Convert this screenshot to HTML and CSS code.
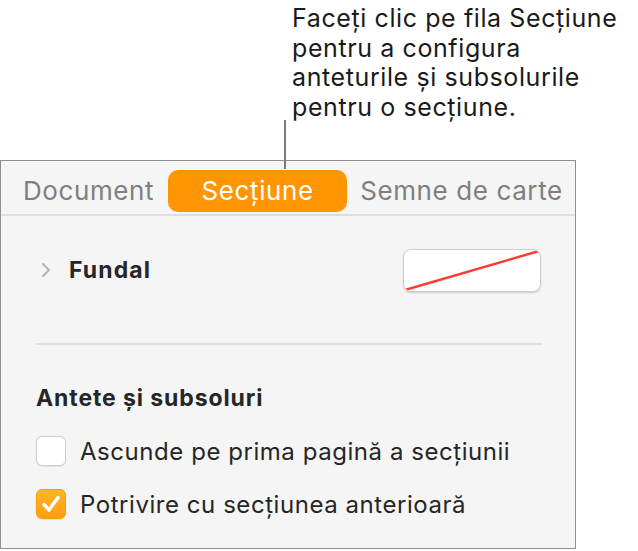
FILE: index.html
```html
<!DOCTYPE html>
<html lang="ro">
<head>
<meta charset="utf-8">
<link rel="stylesheet" href="styles.css">
</head>
<body>
<div class="callout">
  <p class="callout-text">Faceți clic pe fila Secțiune<br>pentru a configura<br>anteturile și subsolurile<br>pentru o secțiune.</p>
  <span class="leader"></span>
</div>
<div class="panel">
  <div class="tabs">
    <span class="tab">Document</span>
    <span class="tab active">Secțiune</span>
    <span class="tab">Semne de carte</span>
  </div>
  <div class="content">
    <div class="fundal-row">
      <svg class="chevron" width="12" height="16" viewBox="0 0 12 16"><path d="M3 2 L9 8 L3 14" fill="none" stroke="#b4b4b4" stroke-width="2" stroke-linecap="round" stroke-linejoin="round"/></svg>
      <span class="fundal-label">Fundal</span>
      <span class="swatch"><svg width="136" height="41" viewBox="0 0 136 41"><line x1="1" y1="40" x2="135" y2="1" stroke="#ff3b30" stroke-width="2.4"/></svg></span>
    </div>
    <div class="divider"></div>
    <h3 class="section-title">Antete și subsoluri</h3>
    <div class="check-row"><span class="box"></span><span class="check-label">Ascunde pe prima pagină a secțiunii</span></div>
    <div class="check-row"><span class="box on"><svg width="24" height="24" viewBox="0 0 24 24"><path d="M5 12.5 L10 18 L19 5.5" fill="none" stroke="#fff" stroke-width="3.4" stroke-linecap="round" stroke-linejoin="round"/></svg></span><span class="check-label">Potrivire cu secțiunea anterioară</span></div>
  </div>
</div>
</body>
</html>
```
FILE: styles.css
```css
html, body {
  margin: 0;
  padding: 0;
  background: #ffffff;
}
body {
  font-family: Inter, "Noto Sans", "Liberation Sans", sans-serif;
  color: #1d1d1f;
  width: 638px;
  height: 551px;
  overflow: hidden;
}
.callout {
  position: relative;
  height: 160px;
}
.callout-text {
  margin: 0;
  padding: 4px 0 0 292px;
  font-size: 25px;
  line-height: 29.7px;
  color: #1a1a1a;
  letter-spacing: 0.6px;
}
.leader {
  position: absolute;
  left: 284px;
  top: 120px;
  width: 2px;
  height: 49px;
  background: #7a7a7a;
  z-index: 2;
}
.panel {
  width: 574px;
  height: 387px;
  border: 1.5px solid #8f8f8f;
  background: #f5f5f5;
  position: relative;
}
.tabs {
  display: flex;
  align-items: center;
  height: 55px;
  border-bottom: 2px solid #dedede;
  padding: 7px 0 0 0;
  box-sizing: border-box;
}
.tab {
  font-size: 26px;
  letter-spacing: 0.6px;
  color: #7f7f7f;
  line-height: 42px;
  height: 42px;
  white-space: nowrap;
}
.tab:first-child {
  margin-left: 22px;
}
.tab.active {
  background: #ff9500;
  color: #ffffff;
  border-radius: 10px;
  width: 179px;
  text-align: center;
  margin-left: 14px;
  margin-right: 13px;
  flex: none;
}
.content {
  padding: 0 34px 0 34px;
}
.fundal-row {
  display: flex;
  align-items: center;
  height: 46px;
  margin-top: 31px;
}
.chevron {
  margin-left: 5px;
  margin-right: 17px;
}
.fundal-label {
  font-size: 23px;
  letter-spacing: 1.1px;
  font-weight: 700;
  color: #262626;
  flex: 1;
}
.swatch {
  width: 136px;
  height: 41px;
  background: #ffffff;
  border: 1px solid #cfcfcf;
  border-radius: 8px;
  box-shadow: 0 1px 2px rgba(0,0,0,0.18);
  display: block;
  overflow: hidden;
}
.swatch svg {
  display: block;
}
.divider {
  height: 2px;
  background: #e0e0e0;
  margin: 50px 0 0 1px;
  width: 506px;
}
.section-title {
  margin: 38px 0 0 1px;
  font-size: 23px;
  letter-spacing: 0.9px;
  font-weight: 700;
  color: #262626;
  line-height: 30px;
}
.check-row {
  display: flex;
  align-items: center;
  height: 30px;
  margin-top: 23px;
}
.check-row + .check-row {
  margin-top: 23px;
}
.box {
  width: 28px;
  height: 28px;
  border: 1px solid #cdcdcd;
  border-radius: 6px;
  background: #ffffff;
  box-shadow: 0 0.5px 1px rgba(0,0,0,0.08);
  margin-left: 1px;
  margin-right: 14px;
  display: flex;
  align-items: center;
  justify-content: center;
  flex: none;
}
.box.on {
  border-color: #f5a00a;
  background: linear-gradient(#ffb52e, #ff9f0a);
}
.check-label {
  font-size: 24px;
  letter-spacing: 0.55px;
  color: #262626;
  white-space: nowrap;
}
```
